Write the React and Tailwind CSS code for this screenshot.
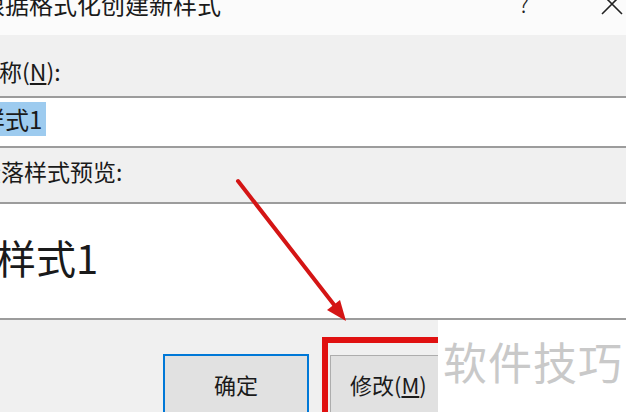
import React from 'react';

const font = { fontFamily: '"Noto Sans CJK SC", "Noto Sans", sans-serif' };

export default function App() {
  return (
    <div
      className="relative w-[626px] h-[412px] overflow-hidden bg-[#f0f0f0] text-[#1a1a1a] flex flex-col"
      style={font}
    >
      {/* title bar */}
      <div className="h-[35px] shrink-0 bg-[#fbfbfb] flex items-start">
        <div className="-ml-[19px] -mt-[8px] text-[24px] leading-none whitespace-nowrap">
          根据格式化创建新样式
        </div>
        <div className="flex-1" />
        <div className="-mt-[8px] text-[23px] leading-none text-[#222] mr-[72px] font-light">?</div>
        <svg width="22" height="22" viewBox="0 0 22 22" className="-mt-[7px] mr-[3px]">
          <path d="M1 1 L21 21 M21 1 L1 21" stroke="#222" strokeWidth="1.6" fill="none" />
        </svg>
      </div>

      {/* name label */}
      <div className="h-[61px] shrink-0 pt-[25px]">
        <div className="-ml-[24px] text-[23px] leading-none whitespace-nowrap">
          名称(<span className="underline underline-offset-2">N</span>):
        </div>
      </div>

      {/* name input */}
      <div className="h-[52px] shrink-0 bg-white border-y-2 border-[#9c9c9c] pt-[4px]">
        <div className="-ml-[19px] inline-flex items-center h-[34px] bg-[#9dcbef] pr-[4px] text-[24px] leading-none whitespace-nowrap">
          样式1
        </div>
      </div>

      {/* preview label */}
      <div className="h-[54px] shrink-0 pt-[12px]">
        <div className="-ml-[22px] text-[23px] leading-none whitespace-nowrap">段落样式预览:</div>
      </div>

      {/* preview box */}
      <div className="h-[118px] shrink-0 bg-white border-y-2 border-[#9c9c9c] pt-[33px]">
        <div className="-ml-[4px] text-[40px] leading-none whitespace-nowrap">样式1</div>
      </div>

      {/* buttons */}
      <div className="flex-1 flex items-start pl-[163px] pt-[17px]">
        <div className="mt-[17px] w-[146px] h-[60px] shrink-0 border-2 border-[#0078d7] bg-[#e1e1e1] flex justify-center pt-[17px]">
          <span className="text-[22px] leading-none">确定</span>
        </div>
        <div className="ml-[13px] h-[80px] flex-1 border-t-[6px] border-l-[6px] border-[#e01010] pl-[2px] pt-[12px]">
          <div className="w-[160px] h-[62px] border border-[#adadad] bg-[#e1e1e1] pl-[19px] pt-[17px]">
            <span className="text-[22px] leading-none whitespace-nowrap">
              修改(<span className="underline underline-offset-2">M</span>)
            </span>
          </div>
        </div>
      </div>

      {/* watermark */}
      <div className="absolute left-[438px] top-[320px] w-[188px] h-[92px] bg-white pl-[5px] pt-[19px]">
        <span className="text-[44px] leading-none tracking-[1px] text-[#c9c9c9] whitespace-nowrap">软件技巧</span>
      </div>

      {/* red arrow */}
      <svg className="absolute inset-0 pointer-events-none" width="626" height="412" viewBox="0 0 626 412">
        <line x1="238" y1="181" x2="335" y2="306" stroke="#d41515" strokeWidth="4" strokeLinecap="round" />
        <polygon points="346,321 340,300 327,310" fill="#d41515" />
      </svg>
    </div>
  );
}
